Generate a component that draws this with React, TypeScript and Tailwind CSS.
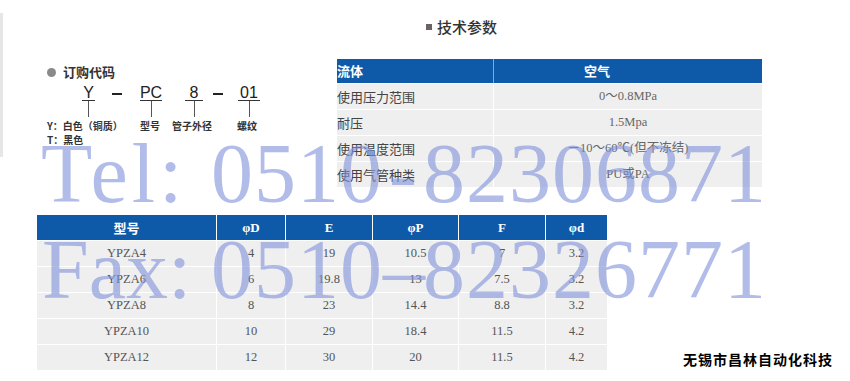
import React from "react";

const headerBlue = "bg-[#0f5aa8]";

function CodeSeg({ text, w, ml }: { text: string; w: string; ml: string }) {
  return (
    <div className={`flex flex-col items-center ${w} ${ml}`}>
      <div className="h-[15px] text-[16px] leading-[15px] text-[#222] font-['Liberation_Sans',Arial,sans-serif] whitespace-nowrap">
        {text}
      </div>
      <div className="h-px w-full bg-[#333]" />
      <div className="h-[16px] w-px bg-[#555]" />
    </div>
  );
}

function CodeDash({ ml }: { ml: string }) {
  return <div className={`mt-[8px] h-[1.5px] w-[10px] bg-[#222] ${ml}`} />;
}

const topRows: [string, string][] = [
  ["使用压力范围", "0～0.8MPa"],
  ["耐压", "1.5Mpa"],
  ["使用温度范围", "－10～60℃(但不冻结)"],
  ["使用气管种类", "PU或PA"],
];

const colWidths = ["w-[179px]", "w-[69px]", "w-[87px]", "w-[86px]", "w-[87px]", "w-[62px]"];
const headers = ["型号", "φD", "E", "φP", "F", "φd"];
const rows: string[][] = [
  ["YPZA4", "4", "19", "10.5", "7", "3.2"],
  ["YPZA6", "6", "19.8", "13", "7.5", "3.2"],
  ["YPZA8", "8", "23", "14.4", "8.8", "3.2"],
  ["YPZA10", "10", "29", "18.4", "11.5", "4.2"],
  ["YPZA12", "12", "30", "20", "11.5", "4.2"],
];

export default function App() {
  return (
    <div className="relative h-[381px] w-[850px] overflow-hidden bg-white font-['Liberation_Sans','Noto_Sans_CJK_SC',sans-serif]">
      {/* top section */}
      <div className="flex h-[215px]">
        {/* ordering code */}
        <div className="w-[337px] pt-[13px]">
          <div className="h-[144px] border-l-[3px] border-[#e6e6e6] pl-[44px] pt-[52px]">
            <div className="flex h-[14px] items-center">
              <div className="h-[9px] w-[9px] rounded-full bg-[#8a8a8a]" />
              <div className="ml-[7px] text-[13px] font-bold leading-[14px] text-[#333] font-['Noto_Sans_CJK_SC',sans-serif]">
                订购代码
              </div>
            </div>
            <div className="mt-[6px] flex items-start">
              <CodeSeg text="Y" w="w-[13px]" ml="ml-[35px]" />
              <CodeDash ml="ml-[17px]" />
              <CodeSeg text="PC" w="w-[22px]" ml="ml-[18px]" />
              <CodeSeg text="8" w="w-[18px]" ml="ml-[23px]" />
              <CodeDash ml="ml-[10px]" />
              <CodeSeg text="01" w="w-[22px]" ml="ml-[15px]" />
            </div>
            <div className="mt-[3px] flex text-[10px] font-bold leading-[12px] text-[#333] font-['Noto_Sans_CJK_SC',sans-serif] whitespace-nowrap">
              <div className="w-[93px]">Y：白色（铜质）</div>
              <div className="w-[32px]">型号</div>
              <div className="w-[65px]">管子外径</div>
              <div>螺纹</div>
            </div>
            <div className="mt-[2px] text-[10px] font-bold leading-[12px] text-[#333] font-['Noto_Sans_CJK_SC',sans-serif]">
              T：黑色
            </div>
          </div>
        </div>

        {/* technical parameters */}
        <div className="w-[425px] pt-[18px]">
          <div className="flex h-[17px] items-center">
            <div className="ml-[89px] h-[6px] w-[6px] bg-[#6b6363]" />
            <div className="ml-[5px] text-[15px] font-medium leading-[17px] text-[#333] font-['Noto_Sans_CJK_SC',sans-serif]">
              技术参数
            </div>
          </div>
          <div className="mt-[24px] font-['Noto_Sans_CJK_SC',sans-serif]">
            <div className={`flex h-[24px] ${headerBlue} text-[13px] font-bold leading-[24px] text-white`}>
              <div className="w-[156px]">流体</div>
              <div className="flex-1 border-l border-[#86a9d4] pr-[62px] text-center">空气</div>
            </div>
            {topRows.map(([k, v]) => (
              <div key={k} className="flex h-[26px] border-t border-white bg-[#efefef]">
                <div className="flex w-[156px] items-center text-[13px] text-[#444]">{k}</div>
                <div className="flex flex-1 items-center justify-center border-l border-white text-[12.5px] text-[#666] font-['Liberation_Serif','Noto_Sans_CJK_SC',serif]">
                  {v}
                </div>
              </div>
            ))}
          </div>
        </div>
      </div>

      {/* bottom section */}
      <div className="flex">
        <div className="ml-[37px] w-[570px]">
          <div className={`flex h-[25px] ${headerBlue} text-[13px] font-bold leading-[25px] text-white`}>
            {headers.map((h, i) => (
              <div
                key={h}
                className={`${colWidths[i]} text-center ${i > 0 ? "border-l border-white font-['Liberation_Serif',serif]" : "font-['Noto_Sans_CJK_SC',sans-serif]"}`}
              >
                {h}
              </div>
            ))}
          </div>
          {rows.map((r) => (
            <div key={r[0]} className="flex h-[26px] border-t border-white bg-[#efefef] text-[12.5px] text-[#555] font-['Liberation_Serif',serif]">
              {r.map((c, i) => (
                <div
                  key={i}
                  className={`${colWidths[i]} flex items-center justify-center ${i > 0 ? "border-l border-white" : ""}`}
                >
                  {c}
                </div>
              ))}
            </div>
          ))}
        </div>
        <div className="ml-[76px] mt-[136px] whitespace-nowrap text-[14px] font-bold leading-[16px] tracking-[1px] text-black font-['Noto_Sans_CJK_SC',sans-serif]">
          无锡市昌林自动化科技
        </div>
      </div>

      {/* watermark */}
      <div className="pointer-events-none absolute inset-0 font-['Liberation_Serif',serif] text-[84px] leading-none text-[#7d8fdb]/60">
        <div className="absolute left-[41px] top-[132px] flex whitespace-nowrap">
          <span className="w-[170px] tracking-[4px]">Tel:</span>
          <span className="tracking-[1px]">0510</span>
          <span className="w-[40px] text-center">-</span>
          <span className="tracking-[1px]">82306871</span>
        </div>
        <div className="absolute left-[42px] top-[228px] flex whitespace-nowrap">
          <span className="w-[169px]">Fax:</span>
          <span className="tracking-[1px]">0510</span>
          <span className="w-[40px] text-center">–</span>
          <span className="tracking-[1px]">82326771</span>
        </div>
      </div>
    </div>
  );
}
